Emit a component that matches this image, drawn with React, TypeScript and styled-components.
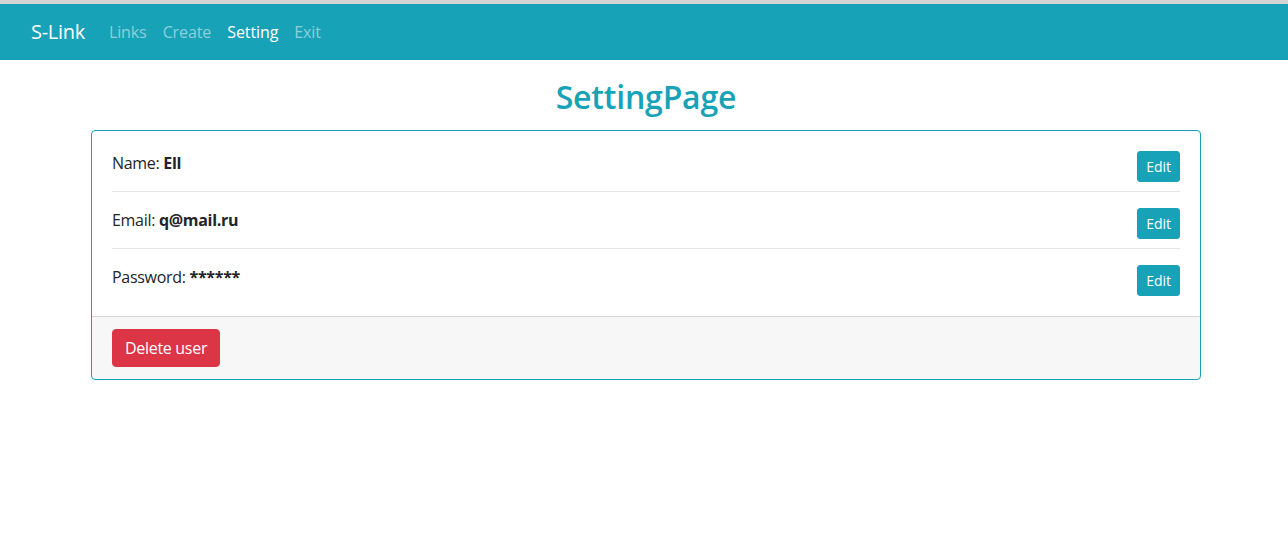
import React from 'react';
import styled, { createGlobalStyle } from 'styled-components';

const GlobalStyle = createGlobalStyle`
  html, body {
    margin: 0;
    padding: 0;
    background: #fff;
  }
  body {
    font-family: "Open Sans", "Noto Sans", sans-serif;
    font-size: 16px;
    line-height: 1.5;
    color: #212529;
  }
  * {
    box-sizing: border-box;
  }
`;

const TopStrip = styled.div`
  height: 4px;
  background: #d4d4d4;
`;

const Navbar = styled.nav`
  display: flex;
  align-items: center;
  height: 56px;
  padding: 0 16px 0 31px;
  background: #17a2b8;
`;

const Brand = styled.a`
  font-size: 20px;
  line-height: 30px;
  letter-spacing: -0.3px;
  color: #fff;
  margin-right: 16px;
  text-decoration: none;
`;

const NavList = styled.ul`
  display: flex;
  list-style: none;
  margin: 0;
  padding: 0;
`;

const NavLink = styled.a<{ $active?: boolean }>`
  display: block;
  padding: 8px;
  font-size: 16px;
  letter-spacing: -0.1px;
  color: ${({ $active }) => ($active ? '#fff' : 'rgba(255, 255, 255, 0.5)')};
  text-decoration: none;
`;

const Container = styled.main`
  max-width: 1114px;
  margin: 0 auto;
  padding-left: 4px;
`;

const Title = styled.h2`
  margin: 18px 0 14px;
  font-size: 32px;
  font-weight: 600;
  line-height: 1.2;
  letter-spacing: -0.2px;
  text-align: center;
  color: #17a2b8;
`;

const Card = styled.section`
  border: 1px solid #17a2b8;
  border-radius: 4px;
  overflow: hidden;
`;

const CardBody = styled.div`
  padding: 20px;
`;

const Row = styled.div`
  display: flex;
  justify-content: space-between;
  align-items: flex-start;
  padding: 16px 0 9px;
  border-bottom: 1px solid rgba(0, 0, 0, 0.1);

  &:first-child {
    padding-top: 0;
  }
  &:last-child {
    padding-bottom: 0;
    border-bottom: none;
  }
`;

const Field = styled.p`
  margin: 0;
  letter-spacing: -0.3px;
`;

const Value = styled.b`
  font-weight: 700;
`;

const EditButton = styled.button`
  font-family: inherit;
  font-size: 14px;
  line-height: 21px;
  padding: 4px 8px;
  border: 1px solid #17a2b8;
  border-radius: 3px;
  background: #17a2b8;
  color: #fff;
  cursor: pointer;
`;

const CardFooter = styled.div`
  padding: 12px 20px;
  background: rgba(0, 0, 0, 0.03);
  border-top: 1px solid rgba(0, 0, 0, 0.125);
`;

const DangerButton = styled.button`
  font-family: inherit;
  font-size: 16px;
  line-height: 24px;
  letter-spacing: -0.3px;
  padding: 6px 12px;
  border: 1px solid #dc3545;
  border-radius: 4px;
  background: #dc3545;
  color: #fff;
  cursor: pointer;
`;

const fields = [
  { label: 'Name', value: 'Ell' },
  { label: 'Email', value: 'q@mail.ru' },
  { label: 'Password', value: '******' },
];

const App = () => (
  <>
    <GlobalStyle />
    <TopStrip />
    <Navbar>
      <Brand href="#">S-Link</Brand>
      <NavList>
        <li><NavLink href="#">Links</NavLink></li>
        <li><NavLink href="#">Create</NavLink></li>
        <li><NavLink href="#" $active>Setting</NavLink></li>
        <li><NavLink href="#">Exit</NavLink></li>
      </NavList>
    </Navbar>
    <Container>
      <Title>SettingPage</Title>
      <Card>
        <CardBody>
          {fields.map(f => (
            <Row key={f.label}>
              <Field>
                {f.label}: <Value>{f.value}</Value>
              </Field>
              <EditButton>Edit</EditButton>
            </Row>
          ))}
        </CardBody>
        <CardFooter>
          <DangerButton>Delete user</DangerButton>
        </CardFooter>
      </Card>
    </Container>
  </>
);

export default App;
